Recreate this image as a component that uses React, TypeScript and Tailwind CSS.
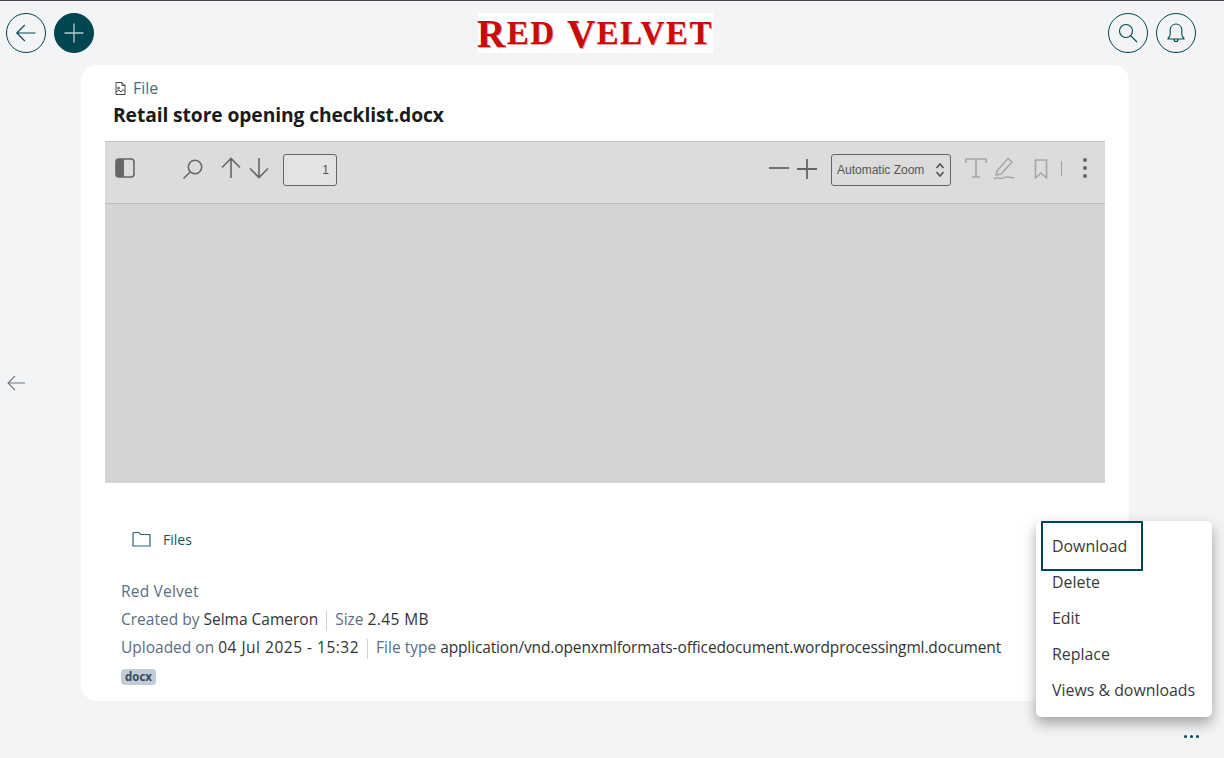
import React from "react";

const Circle = ({ children, filled }: { children: React.ReactNode; filled?: boolean }) => (
  <div className={`w-10 h-10 rounded-full flex items-center justify-center border border-[#004650] ${filled ? "bg-[#004650]" : ""}`}>
    {children}
  </div>
);

const Sep = () => <span className="inline-block w-px h-5 bg-[#c9d3dc] mx-2 align-middle" />;

export default function App() {
  return (
    <div className="relative h-[758px] w-[1224px] overflow-hidden bg-[#f3f4f6] border-t border-[#45474a] font-['Open_Sans',sans-serif] text-[15.5px] text-[#212529]">
      <header className="relative flex h-[64px] items-start justify-between pl-[6px] pr-[28px] pt-[12px]">
        <div className="flex gap-2">
          <Circle>
            <svg width="22" height="22" viewBox="0 0 22 22" fill="none" stroke="#004650" strokeWidth="1.1">
              <path d="M20.5 11H1.8M9.8 3 1.8 11l8 8" />
            </svg>
          </Circle>
          <Circle filled>
            <svg width="20" height="20" viewBox="0 0 20 20" fill="none" stroke="#b4ccd0" strokeWidth="1.3">
              <path d="M10 0.5v19M0.5 10h19" />
            </svg>
          </Circle>
        </div>
        <div className="ml-[-12px] flex h-10 w-[235px] items-center justify-center bg-white font-['Liberation_Serif',serif] text-[39px] font-bold leading-none tracking-[1.5px] text-[#c80b0b] [text-shadow:1px_1px_0_#e8a0a0]">
          R<span className="text-[33px]">ED</span>&nbsp;V<span className="text-[33px]">ELVET</span>
        </div>
        <div className="flex gap-2">
          <Circle>
            <svg width="20" height="20" viewBox="0 0 20 20" fill="none" stroke="#004650" strokeWidth="1.1">
              <circle cx="8" cy="8" r="6.5" />
              <path d="M12.7 12.7 19 19" />
            </svg>
          </Circle>
          <Circle>
            <svg width="18" height="20" viewBox="0 0 18 20" fill="none" stroke="#004650" strokeWidth="1.1">
              <path d="M1 15.5c1.6-1 2.2-2.3 2.2-4.5V7.2C3.2 3.6 5.6 1 9 1s5.800 2.600 5.800 6.200V11c0 2.200.6 3.500 2.200 4.500v.5H1zM7 16.200c0 1.400.9 2.300 2 2.300s2-.9 2-2.300" />
            </svg>
          </Circle>
        </div>
      </header>

      <div className="flex h-[636px] items-stretch">
        <div className="flex w-[81px] items-center pb-[1px] pl-[7px]">
          <svg width="18" height="16" viewBox="0 0 18 16" fill="none" stroke="#6d7780" strokeWidth="1.1">
            <path d="M18 8H1M8 1 1 8l7 7" />
          </svg>
        </div>

        <main className="w-[1048px] rounded-2xl bg-white px-6 pt-[14px]">
          <div className="flex h-[18px] items-center pl-[10px] text-[#4c6a7f]">
            <svg width="11" height="13" viewBox="0 0 11 13" fill="none" stroke="#333" strokeWidth="0.9" className="mr-[7px]">
              <path d="M1 .5h6l3 3v9H1zM7 .5v3h3" />
              <circle cx="3.500" cy="6" r="1" />
              <path d="M1 10l3-2 2 2 2-2.500 2 2" />
            </svg>
            <span className="text-[16px] leading-none">File</span>
          </div>
          <h1 className="mt-[5px] pl-[8px] text-[19.25px] font-bold leading-[26px] tracking-[-0.1px] text-[#1b1b1b]">
            Retail store opening checklist.docx
          </h1>

          <section className="mt-[13px] h-[342px] w-[1000px] border-t border-[#c2c2c2] bg-[#d4d4d7]">
            <div className="flex h-[62px] items-center border-b border-[#bdbdbd] bg-[#dcdcdc] pb-[6px] font-['Liberation_Sans',sans-serif]">
              <svg width="20" height="20" viewBox="0 0 20 20" className="mb-[4px] ml-[10px]">
                <rect x="1" y="1" width="18" height="18" rx="3" fill="none" stroke="#666" strokeWidth="1.6" />
                <path d="M3 1h6v18H3a2 2 0 0 1-2-2V3a2 2 0 0 1 2-2z" fill="#666" />
              </svg>
              <svg width="22" height="22" viewBox="0 0 22 22" fill="none" stroke="#666" strokeWidth="1.6" className="mb-[2px] ml-[47px]">
                <circle cx="13" cy="9" r="6.700" />
                <path d="M8.300 14 1.500 20.500" />
              </svg>
              <svg width="20" height="22" viewBox="0 0 20 22" fill="none" stroke="#666" strokeWidth="1.6" className="mb-[4px] ml-[17px]">
                <path d="M10 21V1.500M1 10.500l9-9 9 9" />
              </svg>
              <svg width="20" height="22" viewBox="0 0 20 22" fill="none" stroke="#666" strokeWidth="1.6" className="mb-[4px] ml-[8px]">
                <path d="M10 1v19.500M1 11.500l9 9 9-9" />
              </svg>
              <div className="ml-[14px] flex h-8 w-[54px] items-center justify-end rounded-[3px] border border-[#666] bg-[#e3e3e3] pr-[7px] text-[12px] text-[#555]">
                1
              </div>
              <svg width="20" height="4" viewBox="0 0 20 4" fill="none" stroke="#666" strokeWidth="1.8" className="mb-[4px] ml-[432px]">
                <path d="M0 2h20" />
              </svg>
              <svg width="20" height="20" viewBox="0 0 20 20" fill="none" stroke="#666" strokeWidth="1.8" className="mb-[2px] ml-[8px]">
                <path d="M0 10h20M10 0v20" />
              </svg>
              <div className="ml-[14px] flex h-8 w-[120px] items-center justify-between rounded-[3px] border border-[#666] bg-[#dcdcdc] px-[5px] text-[12px] text-[#555]">
                <span>Automatic Zoom</span>
                <svg width="10" height="16" viewBox="0 0 10 16" fill="none" stroke="#555" strokeWidth="1.7">
                  <path d="M1.500 6 5 2l3.500 4M1.500 10 5 14l3.500-4" />
                </svg>
              </div>
              <svg width="22" height="22" viewBox="0 0 22 22" fill="none" stroke="#a6a6a6" strokeWidth="1.7" className="mb-[4px] ml-[14px]">
                <path d="M1 6V2h20v4M11 2v18M7 20h8" />
              </svg>
              <svg width="22" height="24" viewBox="0 0 22 24" fill="none" stroke="#a6a6a6" strokeWidth="1.5" className="mb-[4px] ml-[6px]">
                <path d="M4 15 15 2.500l4 3.500L8 18l-5 1zM1 23c4-3 6 1 9-1s5-1 11 0" />
              </svg>
              <svg width="14" height="20" viewBox="0 0 14 20" fill="none" stroke="#a6a6a6" strokeWidth="1.6" className="mb-[2px] ml-[19px]">
                <path d="M1.500 1h11v18L7 14l-5.500 5z" />
              </svg>
              <div className="mb-[2px] ml-[13px] h-[15px] w-px bg-[#a0a0a0]" />
              <div className="mb-[4px] ml-[21px] flex flex-col gap-[4px]">
                <span className="h-1 w-1 rounded-full bg-[#666]" />
                <span className="h-1 w-1 rounded-full bg-[#666]" />
                <span className="h-1 w-1 rounded-full bg-[#666]" />
              </div>
            </div>
          </section>

          <div className="mt-[47px] flex h-[18px] items-center pl-[27px]">
            <svg width="19" height="16" viewBox="0 0 19 16" fill="none" stroke="#2e6570" strokeWidth="1.2">
              <path d="M1 2.500a1 1 0 0 1 1-1h5l1.500 2H18v11.500H1z" />
            </svg>
            <a className="ml-[12px] text-[14px] text-[#165762]">Files</a>
          </div>

          <div className="mt-[29px] pl-4 leading-[28px] text-[#333]">
            <div className="tracking-[0.2px] text-[#5a6e80]">Red Velvet</div>
            <div>
              <span className="text-[#5a6e80]">Created by</span> Selma Cameron
              <Sep />
              <span className="text-[#5a6e80]">Size</span> <span className="tracking-[0.4px]">2.45 MB</span>
            </div>
            <div>
              <span className="text-[#5a6e80]">Uploaded on</span> <span className="tracking-[0.5px]">04 Jul 2025 - 15:32</span>
              <Sep />
              <span className="text-[#5a6e80]">File type</span> <span className="tracking-[-0.13px]">application/vnd.openxmlformats-officedocument.wordprocessingml.document</span>
            </div>
            <div className="mt-[8px] flex">
              <span className="flex h-4 items-center rounded-[4px] bg-[#c0ccd8] px-1 text-[11.5px] font-bold text-[#3c4a58]">docx</span>
            </div>
          </div>
        </main>

        <div className="flex w-[95px] flex-col items-end justify-end pr-[25px]">
          <div className="mb-[-37px] flex gap-[3px]">
            <span className="h-[3px] w-[3px] rounded-full bg-[#004650]" />
            <span className="h-[3px] w-[3px] rounded-full bg-[#004650]" />
            <span className="h-[3px] w-[3px] rounded-full bg-[#004650]" />
          </div>
        </div>
      </div>

      <div className="absolute left-[1036px] top-[520px] h-[196px] w-[176px] rounded-[5px] bg-white pb-2 pt-[8px] text-[15.9px] text-[#3a3a3a] shadow-[0_6px_14px_rgba(0,0,0,0.35)]">
        <div className="absolute left-[5px] top-0 h-[50px] w-[102px] border-2 border-[#004650]" />
        <ul>
          {["Download", "Delete", "Edit", "Replace", "Views & downloads"].map((t) => (
            <li key={t} className="flex h-9 items-center px-4">{t}</li>
          ))}
        </ul>
      </div>
    </div>
  );
}
